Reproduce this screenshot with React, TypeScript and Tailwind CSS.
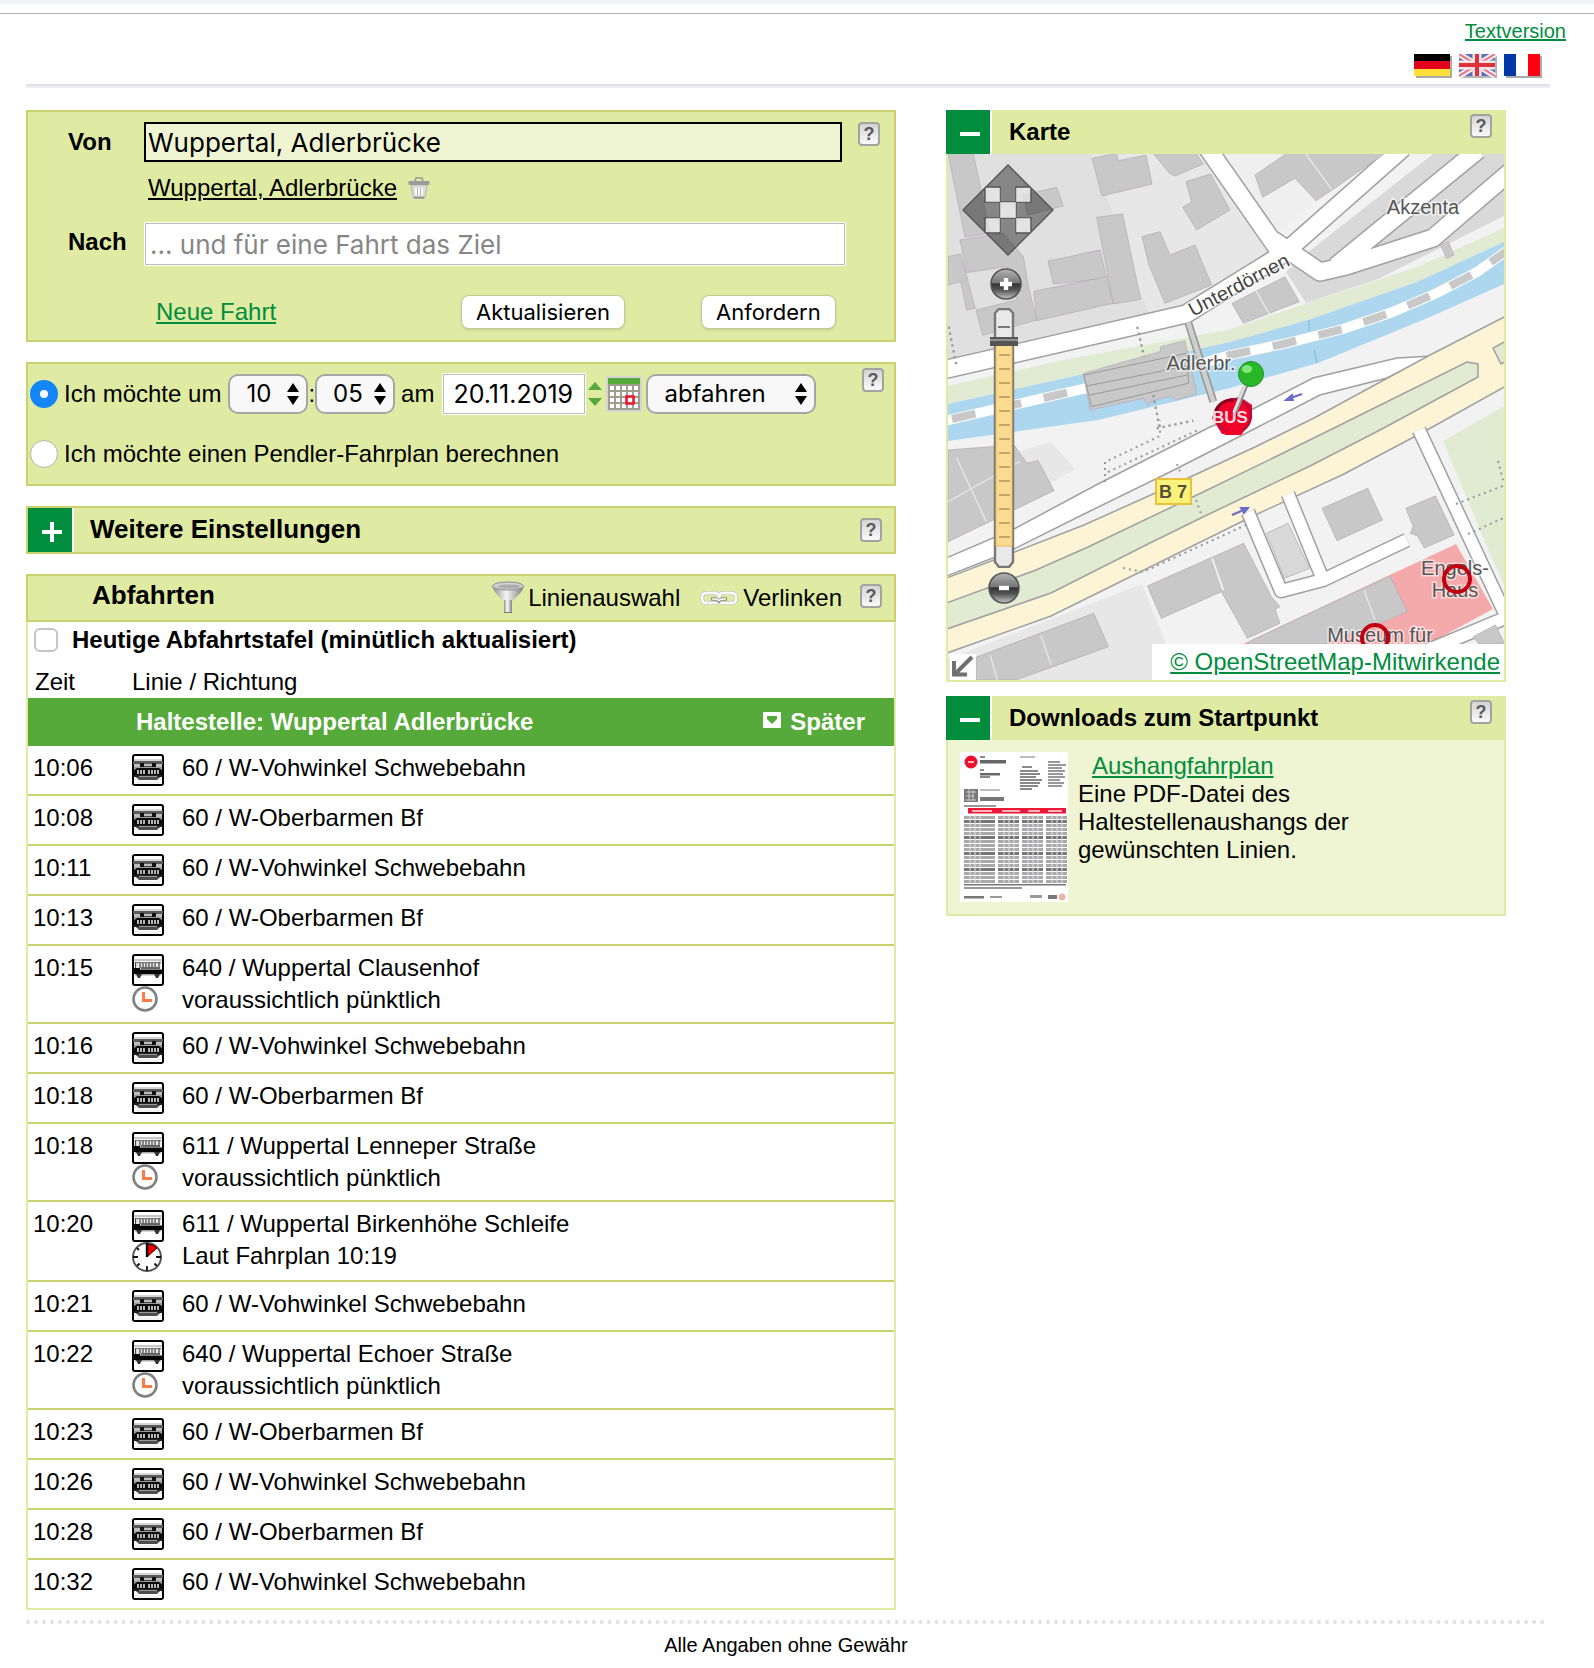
import React from "react";

type Kind = "rail" | "bus";
type Departure = {
  time: string;
  kind: Kind;
  line: string;
  note?: string;
  late?: boolean;
};

const departures: Departure[] = [
  { time: "10:06", kind: "rail", line: "60 / W-Vohwinkel Schwebebahn" },
  { time: "10:08", kind: "rail", line: "60 / W-Oberbarmen Bf" },
  { time: "10:11", kind: "rail", line: "60 / W-Vohwinkel Schwebebahn" },
  { time: "10:13", kind: "rail", line: "60 / W-Oberbarmen Bf" },
  { time: "10:15", kind: "bus", line: "640 / Wuppertal Clausenhof", note: "voraussichtlich pünktlich" },
  { time: "10:16", kind: "rail", line: "60 / W-Vohwinkel Schwebebahn" },
  { time: "10:18", kind: "rail", line: "60 / W-Oberbarmen Bf" },
  { time: "10:18", kind: "bus", line: "611 / Wuppertal Lenneper Straße", note: "voraussichtlich pünktlich" },
  { time: "10:20", kind: "bus", line: "611 / Wuppertal Birkenhöhe Schleife", note: "Laut Fahrplan 10:19", late: true },
  { time: "10:21", kind: "rail", line: "60 / W-Vohwinkel Schwebebahn" },
  { time: "10:22", kind: "bus", line: "640 / Wuppertal Echoer Straße", note: "voraussichtlich pünktlich" },
  { time: "10:23", kind: "rail", line: "60 / W-Oberbarmen Bf" },
  { time: "10:26", kind: "rail", line: "60 / W-Vohwinkel Schwebebahn" },
  { time: "10:28", kind: "rail", line: "60 / W-Oberbarmen Bf" },
  { time: "10:32", kind: "rail", line: "60 / W-Vohwinkel Schwebebahn" },
];

function Help({ className = "" }: { className?: string }) {
  return (
    <button
      type="button"
      aria-label="Hilfe"
      className={
        "flex h-6 w-[22px] shrink-0 items-center justify-center rounded-sm border-2 border-[#a3a3a0] bg-linear-to-b from-[#d4d4d4] to-[#fafafa] text-[18px] leading-5 font-bold text-[#5a5a5a] " +
        className
      }
    >
      ?
    </button>
  );
}

function FlagDe() {
  return (
    <svg width="38" height="24" viewBox="0 0 38 24" aria-hidden="true">
      <rect x="2" y="2" width="36" height="22" fill="#aaa" />
      <rect width="36" height="8" fill="#000" />
      <rect y="7" width="36" height="8" fill="#e3001b" />
      <rect y="15" width="36" height="7" fill="#ffe03a" />
    </svg>
  );
}

function FlagGb() {
  return (
    <svg width="38" height="24" viewBox="0 0 38 24" aria-hidden="true">
      <rect x="2" y="2" width="36" height="22" fill="#b4b4b4" />
      <rect width="36" height="22" fill="#5d70b4" />
      <path d="M0 0 36 22M36 0 0 22" stroke="#f0eef4" strokeWidth="6" />
      <path d="M0 0 36 22M36 0 0 22" stroke="#ea7078" strokeWidth="2" />
      <path d="M18 0V22M0 11H36" stroke="#f3e4e8" strokeWidth="9" />
      <path d="M18 0V22M0 11H36" stroke="#e0303c" strokeWidth="4" />
    </svg>
  );
}

function FlagFr() {
  return (
    <svg width="38" height="24" viewBox="0 0 38 24" aria-hidden="true">
      <rect x="2" y="2" width="36" height="22" fill="#aaa" />
      <rect width="12" height="22" fill="#0038a8" />
      <rect x="12" width="12" height="22" fill="#fff" />
      <rect x="24" width="12" height="22" fill="#ff0010" />
    </svg>
  );
}

function TrashIcon() {
  return (
    <svg width="22" height="22" viewBox="0 0 22 22" aria-hidden="true">
      <path d="M7 4 8 1h6l1 3" fill="none" stroke="#9a9a92" strokeWidth="1.6" />
      <path d="M3 8h16l-2 12q0 1.5-2 1.5H7Q5 21.500 5 20Z" fill="#dcdcdc" stroke="#b4b4b0" strokeWidth="1" />
      <rect x="0.500" y="4" width="21" height="4" rx="1" fill="#9c9c98" />
      <path d="M8 10.500V18M11 10.500V18M14 10.500V18" stroke="#fff" strokeWidth="1.600" />
      <path d="M9.500 10.500V18M12.500 10.500V18" stroke="#b5b5b5" strokeWidth="1" />
      <path d="M6 20.500h10" stroke="#8c8c8c" strokeWidth="1.600" />
    </svg>
  );
}

function FunnelIcon() {
  return (
    <svg width="32" height="34" viewBox="0 0 32 34" aria-hidden="true">
      <defs>
        <linearGradient id="funnel" x1="0" x2="1" y1="0" y2="0">
          <stop offset="0" stopColor="#8a8a8a" />
          <stop offset="0.45" stopColor="#f4f4f4" />
          <stop offset="1" stopColor="#7d7d7d" />
        </linearGradient>
        <linearGradient id="funnel-stem" x1="0" x2="1" y1="0" y2="0">
          <stop offset="0" stopColor="#8e8e8e" />
          <stop offset="0.4" stopColor="#fff" />
          <stop offset="1" stopColor="#808080" />
        </linearGradient>
      </defs>
      <path d="M0 5Q2 12 12 20H20Q30 12 32 5Z" fill="url(#funnel)" />
      <path d="M12 19H20V32H12Z" fill="url(#funnel-stem)" />
      <path d="M12 31.500H20" stroke="#777" />
      <ellipse cx="16" cy="5" rx="15.500" ry="4" fill="#cfcfcf" stroke="#909090" />
      <ellipse cx="17" cy="5.500" rx="11" ry="2" fill="#ababab" />
    </svg>
  );
}

function ChainIcon() {
  return (
    <svg width="38" height="16" viewBox="0 0 38 16" aria-hidden="true">
      <rect x="2" y="3" width="17" height="10" rx="4" fill="none" stroke="#b4b4aa" strokeWidth="4" />
      <rect x="19" y="3" width="17" height="10" rx="4" fill="none" stroke="#b4b4aa" strokeWidth="4" />
      <rect x="2" y="3" width="17" height="10" rx="4" fill="none" stroke="#f8f8f8" strokeWidth="3" />
      <rect x="19" y="3" width="17" height="10" rx="4" fill="none" stroke="#f8f8f8" strokeWidth="3" />
      <path d="M11 9h5l3 2 3-2h5" fill="none" stroke="#8c8c82" strokeWidth="3.400" />
      <path d="M12 9h4l3 1.500 3-1.500h4" fill="none" stroke="#fff" strokeWidth="1.400" />
    </svg>
  );
}

function RailIcon() {
  return (
    <svg width="32" height="32" viewBox="0 0 32 32" role="img" aria-label="Schwebebahn" className="shrink-0">
      <rect x="1" y="1" width="30" height="30" rx="2" fill="#fff" stroke="#000" strokeWidth="2" />
      <rect x="2" y="5" width="28" height="3" fill="#d8d8d8" />
      <rect x="1" y="7" width="30" height="3" fill="#5a5a5a" />
      <rect x="2" y="10" width="28" height="3" fill="#bdbdbd" />
      <path d="M8 9h4v4H8ZM20 9h4v4h-4Z" fill="#111" />
      <path d="M12 12h8v2h-8Z" fill="#444" />
      <path d="M2 13H30V17H2Z" fill="#9a9a9a" />
      <path d="M5 14H27l4 3v6H1v-6Z" fill="#0c0c0c" />
      <path d="M6 16v4M9 16v4M12 16v4M17 16v4M20 16v4M23 16v4M26 16v4" stroke="#fff" strokeWidth="1.400" />
      <path d="M2 21h28v3H2Z" fill="#222" />
      <path d="M4 23h24l-3 3H7Z" fill="#4c4c4c" />
      <path d="M7 22.500h18" stroke="#999" strokeWidth="1" />
      <path d="M2 23h2l3 4h18l3-4h2v7H2Z" fill="#f4f4f4" />
    </svg>
  );
}

function BusIcon() {
  return (
    <svg width="32" height="32" viewBox="0 0 32 32" role="img" aria-label="Bus" className="shrink-0">
      <rect x="1" y="1" width="30" height="30" rx="2" fill="#fff" stroke="#000" strokeWidth="2" />
      <rect x="2" y="5" width="28" height="2" fill="#c6c6c6" />
      <path d="M3 9H29V15H3Z" fill="#e8e8e8" />
      <path d="M3 8.500H29" stroke="#777" strokeWidth="1.200" />
      <path d="M3.500 8V15M8 9V14M11 9V14M14 9V14M17 9V14M20 9V14M23 9V14M27 8V15" stroke="#444" strokeWidth="1.200" />
      <path d="M1 14H8V15.500H31V20H1Z" fill="#050505" />
      <path d="M9 14H28" stroke="#666" strokeWidth="2" />
      <rect x="3" y="20" width="26" height="1.500" fill="#aaa" />
      <path d="M4 20h6l-2 4H6ZM22 20h6l-2 4h-2Z" fill="#333" />
    </svg>
  );
}

function ClockIcon() {
  return (
    <svg width="26" height="26" viewBox="0 0 26 26" role="img" aria-label="pünktlich" className="shrink-0">
      <circle cx="13" cy="13" r="11.500" fill="#fdfdfd" stroke="#808080" strokeWidth="2.600" />
      <path d="M11.500 6V14.500H20" fill="none" stroke="#ff7a45" strokeWidth="3" />
    </svg>
  );
}

function LateClockIcon() {
  return (
    <svg width="30" height="30" viewBox="0 0 30 30" role="img" aria-label="verspätet" className="shrink-0">
      <circle cx="15" cy="15" r="14" fill="#fff" stroke="#555" strokeWidth="2" />
      <path d="M15 15V2Q21 2 25 6Z" fill="#ee0000" stroke="#400" strokeWidth="1" />
      <path d="M15 1V15" stroke="#000" strokeWidth="2.400" />
      <path d="M15 24V29M1 15H6M24 15H29M5 24 7.500 21.500M25 24 22.500 21.500M5 6 7 8" stroke="#111" strokeWidth="1.800" />
    </svg>
  );
}

function CalendarIcon() {
  return (
    <svg width="36" height="36" viewBox="0 0 36 36" aria-hidden="true">
      <rect width="36" height="36" fill="#d5d6d2" />
      <rect x="2" y="8" width="32" height="26" fill="#9e9e90" />
      <rect x="2" y="2" width="32" height="6" fill="#56aa3a" />
      {[10, 16, 22, 28].map((y) =>
        [4, 10, 16, 22, 28].map((x) => <rect key={x + "-" + y} x={x} y={y} width="4" height="4" fill="#fff" />),
      )}
      <rect x="20.500" y="20.500" width="7" height="7" fill="#fff" stroke="#f0142d" strokeWidth="2.600" />
    </svg>
  );
}

function Select({ label, value, options, className }: { label: string; value: string; options: string[]; className: string }) {
  return (
    <span className={"relative block " + className}>
      <select
        aria-label={label}
        defaultValue={value}
        className="h-10 w-full appearance-none rounded-[10px] border-2 border-[#a6a6a6] bg-[#f8f8f8] pl-4 font-[Inter,sans-serif] text-2xl text-black"
      >
        {options.map((o) => (
          <option key={o}>{o}</option>
        ))}
      </select>
      <svg width="12" height="22" viewBox="0 0 12 22" className="pointer-events-none absolute top-[9px] right-[9px]" aria-hidden="true">
        <path d="M6 0 12 9H0ZM6 22 0 13H12Z" fill="#000" />
      </svg>
    </span>
  );
}

function Toggle({ open, label }: { open: boolean; label: string }) {
  return (
    <button type="button" aria-label={label} aria-expanded={open} className="h-11 w-[46px] shrink-0 border-r-2 border-white bg-[#008d3e]">
      <svg width="44" height="44" viewBox="0 0 44 44" aria-hidden="true">
        <path d={open ? "M14 24H34" : "M14 24H34M24 14V34"} stroke="#fff" strokeWidth="4" />
      </svg>
    </button>
  );
}

const roads = [
  "M-5 216 238 160 335 100 455 -6",
  "M258 -8 332 98",
  "M325 86 372 118 398 112 485 84 562 18",
  "M388 112 530 -4",
];
const sideRoads = ["M300 358 333 437 375 426 459 386", "M340 340 375 426", "M471 276 560 466", "M478 497 562 462"];

function MapDrawing() {
  return (
    <svg viewBox="0 0 556 526" preserveAspectRatio="xMidYMid slice" className="block h-full w-full" role="img" aria-label="Karte Adlerbrücke">
      <rect width="556" height="526" fill="#f2f2f2" />
      <path d="M0 0H258L325 98 240 150 0 204Z" fill="#e7e7e7" />
      <path d="M0 0H143L176 90 200 158 0 204Z" fill="#e0e0e0" />
      <path d="M272 0 330 78 430 0Z" fill="#efefef" />
      <path d="M359 99 485 0H556V62L430 125 358 149 338 118Z" fill="#d9d9d9" />
      <path d="M0 318 103 288 127 315 75 345 0 385Z" fill="#e7e7e7" />
      <path d="M0 505 194 430 218 490 230 526H0Z" fill="#e7e7e7" />

      {/* river with its banks */}
      <path d="M0 232 125 204 280 176 359 149 469 113 556 74V88L469 128 360 166 282 188 140 219 0 250Z" fill="#e1ebd2" />
      <path d="M0 250 140 219 282 188 360 166 469 128 556 88V130L482 163 370 209 282 234 150 266 0 287Z" fill="#acd7ee" />
      <path d="M361 166V177M366 196 369 209" stroke="#7ab6dd" fill="none" />

      {/* suspension railway */}
      <path d="M-4 267 135 235 235 215 282 201 335 190 395 175 442 159 489 139 529 118 560 96" fill="none" stroke="#fff" strokeWidth="10" />
      <path
        d="M4 265 135 235 235 215 282 201 335 190 395 175 442 159 489 139 529 118 560 96"
        fill="none"
        stroke="#c8c8c8"
        strokeWidth="8"
        strokeDasharray="24 23"
      />

      {/* streets */}
      <g fill="none" strokeLinejoin="round">
        {roads.map((d) => (
          <path key={d} d={d} stroke="#a0a0a0" strokeWidth="20" />
        ))}
        {roads.map((d) => (
          <path key={d} d={d} stroke="#fff" strokeWidth="17" />
        ))}
      </g>

      {/* buildings north of the river */}
      <g transform="translate(-8 -54) scale(0.3333)" fill="#c8c8c8" stroke="#b3a8b3" strokeWidth="2">
        <path d="M24 160 100 160 150 400 75 412Z" />
        <path d="M250 285 350 262 370 318 262 345Z" />
        <path d="M456 175 530 160 535 182 618 165 636 252 486 288Z" />
        <path d="M640 160 768 160 790 192 705 228 688 220Z" />
        <path d="M738 245 812 222 870 330 770 390 728 322 755 305Z" />
        <path d="M470 352 548 342 602 598 520 612Z" />
        <path d="M606 410 660 395 690 465 765 435 815 555 675 610 626 492Z" />
        <path d="M324 482 360 476 480 450 500 535 340 552Z" />
        <path d="M282 574 500 530 520 610 290 662Z" />
        <path d="M60 420 190 400 250 470 265 560 290 660 128 706 108 630 230 600 200 500 80 518Z" />
        <path d="M24 470 62 462 106 625 80 630 62 545 24 555Z" />
        <path d="M430 820 660 755 662 740 735 722 770 882 710 900 690 888 632 905 625 918 610 895 450 930Z" />
        <g fill="none" stroke="#999" strokeWidth="3">
          <path d="M432 825 740 760M440 858 742 798M450 885 742 825M455 920 745 850M432 825 455 920M740 760 746 850" />
        </g>
        <path d="M745 668 820 905" stroke="#999" strokeWidth="24" />
        <path d="M745 668 820 905" stroke="#cfcfcf" strokeWidth="14" />
        <path d="M592 680 612 770M640 885 660 990 M650 985 760 962" fill="none" stroke="#999" strokeWidth="7" strokeDasharray="7 11" />
        <path d="M26 680 50 800" fill="none" stroke="#999" strokeWidth="7" strokeDasharray="7 11" />
      </g>
      <g transform="translate(282 -54) scale(0.3333)" fill="#c8c8c8" stroke="#b3a8b3" strokeWidth="2">
        <path d="M75 225 170 160 465 160 310 268 258 302 195 235 98 292Z" />
        <path d="M226 160 305 268" stroke="#e8e8e8" strokeWidth="4" />
        <path d="M6 610 165 530 208 605 40 670Z" />
        <path d="M78 572 122 650" stroke="#e8e8e8" strokeWidth="4" />
        <path d="M632 435 655 425 672 465 650 475Z" />
      </g>

      {/* local street beside the federal road */}
      <path
        d="M-4 405 66 375 150 330 262 273 299 258 365 224 449 204 484 202 439 224 372 241 308 274 226 316 136 360 60 398 -4 423Z"
        fill="#fff"
        stroke="#a0a0a0"
        strokeWidth="1.500"
      />
      {/* federal road */}
      <path
        d="M-4 425 59 401 136 371 214 336 307 293 366 264 482 201 560 161V231L479 276 396 320 303 363 192 418 103 462 -4 500Z"
        fill="#fdf4d6"
        stroke="#a0a0a0"
        strokeWidth="1.500"
      />
      <path
        d="M-4 450 88 416 140 393 251 340 325 304 382 276 519 208 530 210 530 223 432 276 362 312 259 361 200 390 103 439 -4 476Z"
        fill="#e1ebd2"
        stroke="#a0a0a0"
        strokeWidth="1.500"
      />
      <path d="M560 186 545 194 553 210 560 206Z" fill="#e1ebd2" stroke="#a0a0a0" strokeWidth="1.500" />
      <path d="M495 287 560 250V440L540 395Z" fill="#e1ebd2" />

      {/* museum grounds */}
      <path d="M295 490 444 420 508 390 545 455 480 490Z" fill="#f4a9ab" />

      <g fill="none" strokeLinejoin="round">
        {sideRoads.map((d) => (
          <path key={d} d={d} stroke="#a0a0a0" strokeWidth="15" />
        ))}
        {sideRoads.map((d) => (
          <path key={d} d={d} stroke="#fff" strokeWidth="12" />
        ))}
      </g>

      {/* buildings south of the river */}
      <g transform="translate(-8 266) scale(0.3703 0.3333)" fill="#c8c8c8" stroke="#b3a8b3" strokeWidth="2">
        <path d="M22 90 200 75 235 130 265 122 308 212 22 365Z" />
        <path d="M45 115 125 305M22 245 215 125" fill="none" stroke="#e4e4e4" strokeWidth="4" />
        <path d="M560 498 820 370 895 530 918 560 905 568 918 610 830 655 760 515 598 595Z" />
        <path d="M735 415 765 510" stroke="#f2f2f2" strokeWidth="5" />
        <path d="M97 712 415 580 455 680 205 780 97 780Z" />
        <path d="M272 645 300 735M135 705 155 780" stroke="#e4e4e4" strokeWidth="4" />
        <path d="M1032 265 1155 205 1195 300 1072 362Z" />
        <path d="M1258 265 1338 228 1388 345 1308 384 1290 348 1270 340 1278 320Z" />
        <path d="M882 340 940 310 998 445 930 475Z" fill="#d9d9d9" />
        <path d="M840 662 1215 468 1262 575 1210 600 1040 672 830 672Z" />
        <path d="M1145 510 1175 600" stroke="#e4e4e4" strokeWidth="4" />
        <path d="M1440 650 1500 615 1525 672 1455 672Z" />
      </g>
      <g fill="none" stroke="#999" strokeWidth="2" strokeDasharray="2 4">
        <path d="M157 328 157 308 212 282 212 266M160 318 250 276" />
        <path d="M229 310 233 320M248 346 253 360M175 414 195 418 300 370" />
        <path d="M508 350 560 330M520 380 560 362M550 307 556 330" />
      </g>

      {/* one-way arrows */}
      <g stroke="#6a6acb" strokeWidth="2" fill="#6a6acb">
        <path d="M354 240 340 245M344 241 338 246 345 246Z" />
        <path d="M284 361 298 355M293 354 300 354 296 359Z" />
      </g>

      <rect x="208" y="325" width="35" height="25" fill="#fcf27a" stroke="#e9c23c" strokeWidth="2" />
      <g fontFamily="Liberation Sans, sans-serif" fill="#555" stroke="#fff" strokeWidth="3" paintOrder="stroke" strokeOpacity="0.600">
        <text x="475" y="60" fontSize="20" textAnchor="middle">Akzenta</text>
        <text x="253" y="216" fontSize="20" textAnchor="middle">Adlerbr.</text>
        <text x="245" y="163" fontSize="20" transform="rotate(-28 245 163)" fill="#444">Unterdörnen</text>
        <text x="507" y="421" fontSize="20" textAnchor="middle">Engels-</text>
        <text x="507" y="443" fontSize="20" textAnchor="middle">Haus</text>
        <text x="432" y="488" fontSize="20" textAnchor="middle">Museum für</text>
      </g>
      <text x="225" y="344" fontFamily="Liberation Sans, sans-serif" fontSize="18" fontWeight="bold" textAnchor="middle" fill="#55503a">B 7</text>
      <g fill="none" stroke="#c00010" strokeWidth="4">
        <circle cx="509" cy="425" r="13" />
        <circle cx="427" cy="484" r="13" />
      </g>

      {/* stop marker and pin */}
      <path d="M276 246 292 243 304 251V264L294 280H274L264 264Z" fill="#f00028" />
      <circle cx="286" cy="262" r="17" fill="#f00028" stroke="#a8123c" strokeWidth="2" />
      <path d="M266 264Q268 246 286 246" fill="none" stroke="#8e0022" strokeWidth="3" />
      <path d="M274 276H296L293 281H277Z" fill="#f00028" />
      <text x="282" y="269" fontFamily="Liberation Sans, sans-serif" fontSize="17" fontWeight="bold" textAnchor="middle" fill="#ffdbe2">BUS</text>
      <path d="M300 226 287 258" stroke="#8f8f8f" strokeWidth="5" />
      <path d="M299 226 286 258" stroke="#ddd" strokeWidth="3" />
      <circle cx="303" cy="220" r="12.500" fill="#28b828" stroke="#1c8f2a" />
      <ellipse cx="299" cy="215" rx="5" ry="4" fill="#7fe87f" />
    </svg>
  );
}

function RoundZoom({ plus, className }: { plus: boolean; className: string }) {
  return (
    <button type="button" aria-label={plus ? "Vergrößern" : "Verkleinern"} className={"absolute h-8 w-8 " + className}>
      <svg width="32" height="32" viewBox="0 0 32 32" aria-hidden="true">
        <defs>
          <linearGradient id={plus ? "ball-in" : "ball-out"} x1="0" x2="0" y1="0" y2="1">
            <stop offset="0" stopColor="#b4b4b4" />
            <stop offset="0.45" stopColor="#777" />
            <stop offset="0.5" stopColor="#333" />
            <stop offset="0.7" stopColor="#555" />
            <stop offset="1" stopColor="#c4c4c4" />
          </linearGradient>
        </defs>
        <circle cx="16" cy="16" r="15" fill={plus ? "url(#ball-in)" : "url(#ball-out)"} stroke="#555" strokeWidth="1.500" />
        <path d={plus ? "M10 16H22M16 10V22" : "M11 16H21"} stroke="#fff" strokeWidth="4.400" />
      </svg>
    </button>
  );
}

function MapControls() {
  const ticks = Array.from({ length: 14 }, (_, i) => 47 + i * 14);
  return (
    <>
      <button type="button" aria-label="Karte verschieben" className="absolute top-[10px] left-[14px] h-[92px] w-[92px]">
        <svg width="92" height="92" viewBox="0 0 92 92" aria-hidden="true">
          <g fill="#000" fillOpacity="0.400" stroke="#555" strokeWidth="1.400">
            <path d="M46 1 68 23H54V38H38V23H24Z" />
            <path d="M46 91 24 69H38V54H54V69H68Z" />
            <path d="M1 46 23 24V38H38V54H23V68Z" />
            <path d="M91 46 69 68V54H54V38H69V24Z" />
          </g>
          <g fill="#e4e4e4" fillOpacity="0.700">
            <path d="M24 24H38V38H24ZM54 24H68V38H54ZM24 54H38V68H24ZM54 54H68V68H54Z" />
            <path d="M38 38H54V54H38Z" />
          </g>
        </svg>
      </button>
      <RoundZoom plus className="top-[114px] left-[42px]" />
      <svg width="30" height="260" viewBox="0 0 30 260" className="absolute top-[154px] left-[41px]" aria-hidden="true">
        <path d="M6 5 10 1H20L24 5V254L20 259H10L6 254Z" fill="#e9e9e9" stroke="#777" strokeWidth="2.400" />
        <rect x="7" y="37" width="16" height="201" fill="#fbdb90" stroke="#e8bd62" />
        <path d="M9 19H21" stroke="#555" strokeWidth="1.500" />
        {ticks.map((y) => (
          <path key={y} d={`M10 ${y}H21`} stroke="#b4935a" strokeWidth="1.500" />
        ))}
        <rect x="1" y="29" width="28" height="9" fill="#555" />
        <rect x="1" y="31" width="28" height="2" fill="#909090" />
      </svg>
      <RoundZoom plus={false} className="top-[418px] left-[40px]" />
      <button type="button" aria-label="Karte verkleinern" className="absolute bottom-0 left-[2px] h-[26px] w-[26px] bg-white/90">
        <svg width="26" height="26" viewBox="0 0 26 26" aria-hidden="true">
          <path d="M22 3 6 19M4 7V20.500H17" fill="none" stroke="#707070" strokeWidth="4" />
        </svg>
      </button>
      <div className="absolute right-0 bottom-0 bg-white py-1 pr-1 pl-[18px]">
        <a href="#osm" className="block text-2xl leading-7 text-[#008d3e] underline">
          © OpenStreetMap-Mitwirkende
        </a>
      </div>
    </>
  );
}

function Thumbnail() {
  const cols = [4, 38, 62, 86];
  return (
    <svg width="108" height="150" viewBox="0 0 108 150" className="shrink-0" role="img" aria-label="Vorschau Aushangfahrplan">
      <rect width="108" height="150" fill="#fff" />
      <circle cx="11" cy="10" r="6.500" fill="#ee1030" />
      <rect x="8" y="9" width="6" height="2" fill="#fbb" />
      <g fill="#8a8a8a">
        <rect x="20" y="4" width="5" height="2" />
        <rect x="20" y="8" width="26" height="3.500" fill="#666" />
        <rect x="20" y="17" width="4" height="2" />
        <rect x="20" y="21" width="20" height="2.500" fill="#666" />
        <rect x="20" y="24" width="10" height="2" />
        <rect x="60" y="4" width="15" height="2" fill="#bbb" />
        <rect x="62" y="14" width="10" height="2" />
      </g>
      {[0, 1, 2, 3, 4, 5, 6].map((i) => (
        <rect key={i} x="60" y={18 + i * 3} width={[18, 20, 16, 22, 20, 18, 12][i]} height="2" fill="#888" />
      ))}
      {[0, 1, 2, 3, 4, 5, 6, 7, 8].map((i) => (
        <rect key={i} x="88" y={9 + i * 3} width={[12, 18, 14, 17, 15, 17, 12, 16, 14][i]} height="2" fill="#999" />
      ))}
      <rect x="4" y="37" width="14" height="13" fill="#777" />
      <path d="M6 40h10M6 44h8M5 48h11M9 37v12M13 38v11" stroke="#ccc" strokeWidth="1" />
      <rect x="20" y="37" width="20" height="2" fill="#bbb" />
      <rect x="20" y="45" width="24" height="4" fill="#777" />
      <rect x="4" y="53" width="32" height="2" fill="#999" />
      <rect x="8" y="56" width="98" height="5.500" fill="#ee1836" />
      <path d="M12 59h20M42 59h18M68 59h12M88 59h14" stroke="#fbb4be" strokeWidth="2" />
      {cols.map((x) => (
        <g key={x}>
          {Array.from({ length: 17 }, (_, r) => (
            <rect key={r} x={x} y={64 + r * 4} width={x === 4 ? 31 : 21} height="3" fill={r % 4 === 1 ? "#777" : "#a9a9ac"} />
          ))}
          <path d={`M${x + 6} 63V131M${x + 11} 63V131M${x + 16} 63V131`} stroke="#e2e2e4" strokeWidth="1" />
        </g>
      ))}
      <rect x="4" y="132" width="102" height="1.500" fill="#777" />
      <rect x="4" y="135" width="58" height="2" fill="#999" />
      <rect x="4" y="144" width="20" height="2.500" fill="#777" />
      <rect x="30" y="144" width="12" height="2" fill="#999" />
      <rect x="70" y="143" width="12" height="3" fill="#999" />
      <rect x="88" y="143" width="9" height="4" fill="#777" />
      <circle cx="102" cy="145" r="3.500" fill="#eab8a4" />
    </svg>
  );
}

const panel = "border-2 border-[#c9d26c] bg-[#dfeba3]";

function RouteForm() {
  return (
    <section className={panel + " pt-[10px] pb-[11px]"} aria-label="Verbindung">
      <div className="flex items-start">
        <label htmlFor="from" className="mt-[6px] w-[116px] shrink-0 pl-10 font-bold">
          Von
        </label>
        <input
          id="from"
          defaultValue="Wuppertal, Adlerbrücke"
          className="h-10 min-w-0 flex-1 border-2 border-black bg-[#eff5d2] px-[2px] font-[Inter,sans-serif] text-[26px] outline-none"
        />
        <Help className="mr-[14px] ml-4" />
      </div>
      <div className="mt-3 flex items-center gap-[11px] pl-[120px]">
        <a href="#from" className="text-black underline">
          Wuppertal, Adlerbrücke
        </a>
        <button type="button" aria-label="Start löschen">
          <TrashIcon />
        </button>
      </div>
      <div className="mt-5 flex items-start pr-12">
        <label htmlFor="to" className="mt-[6px] w-[116px] shrink-0 pl-10 font-bold">
          Nach
        </label>
        <input
          id="to"
          placeholder="... und für eine Fahrt das Ziel"
          className="h-11 min-w-0 flex-1 border border-white bg-white px-[5px] font-[Inter,sans-serif] text-[26px] ring-1 ring-[#bcbcbc] outline-none ring-inset placeholder:text-[#868686]"
        />
      </div>
      <div className="mt-[29px] grid grid-cols-[305px_240px_1fr] items-center pl-32">
        <a href="#neu" className="justify-self-start text-[#008d3e] underline">
          Neue Fahrt
        </a>
        <button type="button" className="h-[34px] justify-self-start rounded-lg border border-[#c3c99a] bg-white px-[14px] font-[Inter,sans-serif] text-[22px] leading-[30px] shadow-sm">
          Aktualisieren
        </button>
        <button type="button" className="h-[34px] justify-self-start rounded-lg border border-[#c3c99a] bg-white px-[14px] font-[Inter,sans-serif] text-[22px] leading-[30px] shadow-sm">
          Anfordern
        </button>
      </div>
    </section>
  );
}

const radio =
  "mr-[6px] h-7 w-7 shrink-0 appearance-none rounded-full border border-[#b5b5a5] bg-white checked:border-[10px] checked:border-[#1486f8]";

function TimeForm() {
  return (
    <section className={panel + " mt-5 flex items-start"} aria-label="Zeit">
      <div className="flex-1 pt-2 pb-4 pl-[2px]">
        <div className="flex h-11 items-center whitespace-nowrap">
          <input type="radio" name="mode" id="mode-time" defaultChecked className={radio} />
          <label htmlFor="mode-time" className="mr-[7px]">
            Ich möchte um
          </label>
          <Select label="Stunde" value="10" options={["09", "10", "11"]} className="w-20" />
          <span>:</span>
          <Select label="Minute" value="05" options={["00", "05", "10"]} className="w-20" />
          <label htmlFor="date" className="mr-2 ml-[6px]">
            am
          </label>
          <input
            id="date"
            defaultValue="20.11.2019"
            className="h-[42px] w-36 border border-white bg-white px-[10px] font-[Inter,sans-serif] text-[25px] ring-1 ring-[#bcbcbc] ring-inset"
          />
          <span className="ml-[2px] flex flex-col gap-2">
            <button type="button" aria-label="Tag vor">
              <svg width="14" height="8" viewBox="0 0 14 8" aria-hidden="true">
                <path d="M7 0 14 8H0Z" fill="#56aa3a" />
              </svg>
            </button>
            <button type="button" aria-label="Tag zurück">
              <svg width="14" height="8" viewBox="0 0 14 8" aria-hidden="true">
                <path d="M7 8 0 0H14Z" fill="#56aa3a" />
              </svg>
            </button>
          </span>
          <button type="button" aria-label="Kalender" className="mr-1 ml-1">
            <CalendarIcon />
          </button>
          <Select label="Art" value="abfahren" options={["abfahren", "ankommen"]} className="w-[170px]" />
        </div>
        <div className="mt-6 flex items-center">
          <input type="radio" name="mode" id="mode-commuter" className={radio} />
          <label htmlFor="mode-commuter">Ich möchte einen Pendler-Fahrplan berechnen</label>
        </div>
      </div>
      <Help className="mt-1 mr-[10px]" />
    </section>
  );
}

function Departures() {
  return (
    <section className="mt-5" aria-labelledby="departures-title">
      <div className={panel + " flex h-12 items-center pr-3 pl-16"}>
        <h2 id="departures-title" className="mb-[6px] flex-1 text-[26px] leading-8 font-bold">
          Abfahrten
        </h2>
        <a href="#linien" className="flex items-center gap-1 text-black">
          <FunnelIcon />
          Linienauswahl
        </a>
        <a href="#link" className="ml-5 flex items-center gap-[5px] text-black">
          <ChainIcon />
          Verlinken
        </a>
        <Help className="mb-1 ml-[18px]" />
      </div>
      <div className="border-x-2 border-b-2 border-[#dfeba3]">
        <div className="flex items-center pt-1 pl-[6px]">
          <input id="today" type="checkbox" className="h-6 w-6 appearance-none rounded-md border-2 border-[#c4c4c4] bg-white" />
          <label htmlFor="today" className="ml-[14px] font-bold">
            Heutige Abfahrtstafel (minütlich aktualisiert)
          </label>
        </div>
        <table className="w-full table-fixed border-collapse text-left">
          <colgroup>
            <col className="w-[104px]" />
            <col />
          </colgroup>
          <thead>
            <tr>
              <th scope="col" className="pt-[14px] pb-[2px] pl-[7px] font-normal">
                Zeit
              </th>
              <th scope="col" className="pt-[14px] pb-[2px] font-normal">
                Linie / Richtung
              </th>
            </tr>
            <tr className="h-12 bg-[#56aa3a] text-white">
              <td />
              <th scope="colgroup" className="p-0">
                <div className="flex items-center justify-between pr-[29px] pl-1">
                  Haltestelle: Wuppertal Adlerbrücke
                  <a href="#spaeter" className="flex items-center gap-[9px]">
                    <svg width="18" height="16" viewBox="0 0 18 16" className="mb-1" aria-hidden="true">
                      <rect width="18" height="16" rx="1" fill="#fff" />
                      <path d="M4 4H14V7L9 12 4 7Z" fill="#56aa3a" />
                    </svg>
                    Später
                  </a>
                </div>
              </th>
            </tr>
          </thead>
          <tbody>
            {departures.map((d, i) => (
              <tr key={i} className="border-b-2 border-[#c9d26c] align-top last:border-b-0">
                <td className="pt-2 pl-[5px]">{d.time}</td>
                <td className="py-2">
                  <div className="flex h-8 gap-[18px]">
                    {d.kind === "rail" ? <RailIcon /> : <BusIcon />}
                    <span>{d.line}</span>
                  </div>
                  {d.note && (
                    <div className="flex">
                      <span className="w-[50px]">{d.late ? <LateClockIcon /> : <ClockIcon />}</span>
                      <span>{d.note}</span>
                    </div>
                  )}
                </td>
              </tr>
            ))}
          </tbody>
        </table>
      </div>
    </section>
  );
}

export default function App() {
  return (
    <div className="min-h-screen bg-white font-['Liberation_Sans',Arial,sans-serif] text-2xl leading-7 text-black [&_svg]:block">
      <div className="h-1 bg-[#f1f3f5]" />
      <header className="mt-[9px] border-t border-[#b4b4b4] pt-[5px]">
        <div className="flex justify-end pr-7 text-xl leading-6">
          <a href="#text" className="text-[#008d3e] underline">
            Textversion
          </a>
        </div>
        <nav aria-label="Sprache" className="mt-[11px] flex justify-end gap-[7px] pr-[52px]">
          <a href="#de" aria-label="Deutsch">
            <FlagDe />
          </a>
          <a href="#en" aria-label="English">
            <FlagGb />
          </a>
          <a href="#fr" aria-label="Français">
            <FlagFr />
          </a>
        </nav>
      </header>
      <div className="mt-[6px] mr-11 ml-[26px] h-1 border-t-2 border-[#e0dfec] bg-[#eeeef2]" />

      <main className="mt-[22px] grid grid-cols-[870fr_560fr] items-start gap-[50px] pr-[88px] pl-[26px]">
        <div className="min-w-0">
          <RouteForm />
          <TimeForm />
          <section className={panel + " mt-5 flex pr-3"}>
            <Toggle open={false} label="Weitere Einstellungen öffnen" />
            <h2 className="mt-[5px] ml-4 flex-1 text-[26px] leading-8 font-bold">Weitere Einstellungen</h2>
            <Help className="mt-[10px]" />
          </section>
          <Departures />
        </div>

        <div className="min-w-0">
          <section>
            <div className="flex bg-[#dfeba3] pr-[14px]">
              <Toggle open label="Karte schließen" />
              <h2 className="mt-2 ml-[17px] flex-1 font-bold">Karte</h2>
              <Help className="mt-1" />
            </div>
            <div className="border-2 border-t-0 border-[#dfeba3]">
              <div className="relative h-[526px] overflow-hidden">
                <MapDrawing />
                <MapControls />
              </div>
            </div>
          </section>
          <section className="mt-[14px]">
            <div className="flex bg-[#dfeba3] pr-[14px]">
              <Toggle open label="Downloads schließen" />
              <h2 className="mt-2 ml-[17px] flex-1 font-bold">Downloads zum Startpunkt</h2>
              <Help className="mt-1" />
            </div>
            <div className="flex gap-[10px] border-2 border-t-0 border-[#dfeba3] bg-[#eff5d2] px-3 py-3">
              <Thumbnail />
              <div>
                <a href="#aushang" className="ml-[14px] text-[#008d3e] underline">
                  Aushangfahrplan
                </a>
                <p className="max-w-[300px]">Eine PDF-Datei des Haltestellenaushangs der gewünschten Linien.</p>
              </div>
            </div>
          </section>
        </div>
      </main>

      <footer className="mt-[10px] mr-12 ml-[26px] border-t-4 border-dotted border-[#e0e0e6] pt-[7px] text-center text-xl leading-7">
        Alle Angaben ohne Gewähr
      </footer>
    </div>
  );
}
